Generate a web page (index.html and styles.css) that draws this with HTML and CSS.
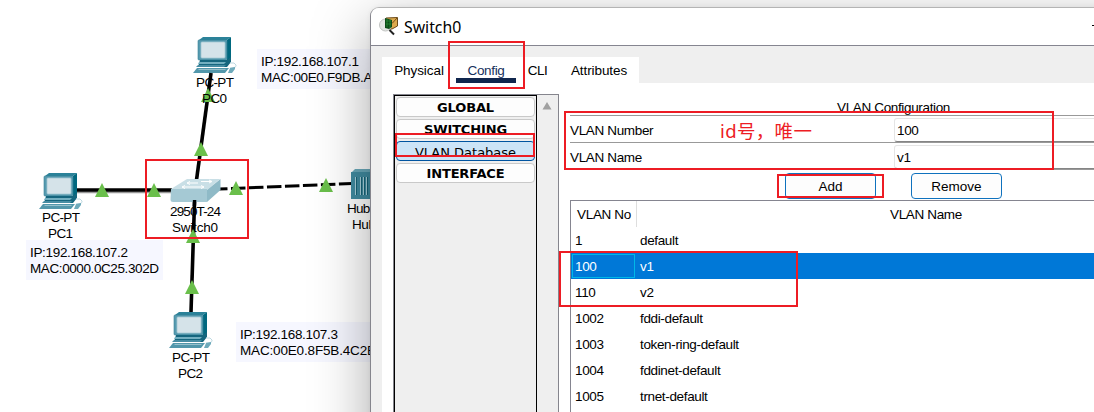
FILE: index.html
```html
<!DOCTYPE html>
<html lang="zh">
<head>
<meta charset="utf-8">
<title>Switch0</title>
<link rel="stylesheet" href="styles.css">
</head>
<body>
<div class="desktop">
  <svg class="topology" width="1094" height="412" viewBox="0 0 1094 412">
    <defs>
      <g id="pc">
        <path fill="#2b8299" d="M1 3 5 0H33L29 3Z"/>
        <path fill="#00687f" d="M29 3 33 0V21L29 24Z"/>
        <rect class="case" x="0" y="3" width="29" height="20" rx="1"/>
        <rect class="screen" x="3" y="5" width="24" height="16" rx="1"/>
        <path fill="#15667e" d="M2 23H29L33 20V25L29 30H0Z"/>
        <path fill="#72afc0" d="M1 25H28L26 27H0Z"/>
        <path fill="#478da3" d="M0 28H28L26 30H-2Z"/>
        <path fill="#5297ab" d="M-1 31H31L27 36H-5Z"/>
        <path fill="#95c0cc" d="M1 32H28L27 33H0Z"/>
        <path fill="none" stroke="#bed9e1" d="M32 26q5-1 6 2t-6 3"/>
        <path fill="#6eaabb" d="M32 31l5-1v2l-3 4h-4z"/>
      </g>
      <path id="up" fill="#6abf4b" d="M0-7 7 7H-7Z"/>
    </defs>

    <g class="notes">
      <rect x="257" y="49" width="150" height="40"/>
      <rect x="26" y="240" width="137" height="40"/>
      <rect x="236" y="322" width="150" height="40"/>
    </g>
    <g class="labels">
      <text x="261" y="66" textLength="98">IP:192.168.107.1</text>
      <text x="261" y="82" textLength="133">MAC:00E0.F9DB.A301</text>
      <text x="30" y="257" textLength="98">IP:192.168.107.2</text>
      <text x="30" y="273" textLength="129">MAC:0000.0C25.302D</text>
      <text x="240" y="339" textLength="98">IP:192.168.107.3</text>
      <text x="240" y="355" textLength="136">MAC:00E0.8F5B.4C2B</text>
    </g>

    <g class="links">
      <path class="shade" d="M74 192.200H172"/>
      <path d="M74 190H172"/>
      <path class="dashed" d="M219 189 352 183.500"/>
    </g>

    <use href="#pc" x="198" y="37"/>
    <use href="#pc" x="44" y="173"/>
    <use href="#pc" x="174" y="312"/>

    <g class="labels">
      <text x="196" y="87" textLength="38">PC-PT</text>
      <text x="42" y="222" textLength="38">PC-PT</text>
      <text x="48" y="238" textLength="25">PC1</text>
      <text x="172" y="362" textLength="38">PC-PT</text>
      <text x="178" y="378" textLength="25">PC2</text>
      <text x="170" y="216" textLength="51">2950T-24</text>
      <text x="172" y="232" textLength="46">Switch0</text>
      <text x="347" y="213" textLength="43">Hub-PT</text>
      <text x="352" y="229" textLength="31">Hub0</text>
    </g>

    <g class="links">
      <path d="M211 73 196.500 180"/>
      <path d="M194.500 202 191 312"/>
    </g>

    <g class="switch">
      <path fill="#c9dfe6" d="M171 189 187 179H220L207 190Z"/>
      <path fill="#a5c9d4" d="M171 189H207V202H173Q170.500 202 170.500 200Z"/>
      <path fill="#8fbac7" d="M207 190 220.500 179V190L207 202Z"/>
      <path class="arrows" d="M187 183h11m-11 0 3-1.500m-3 1.500 3 1.500M201 181.500h11m0 0-3-1.500m3 1.500-3 1.500M182 187h11m-11 0 3-1.500m-3 1.500 3 1.500M193 187h11m0 0-3-1.500m3 1.500-3 1.500"/>
    </g>
    <path class="link-end" d="M194.600 200 194.400 206"/>

    <g class="hub">
      <path fill="#6aa9ba" d="M351 173 355 169H390V173Z"/>
      <rect fill="#418ca1" x="351" y="172" width="40" height="27"/>
      <path stroke="#a9d2dd" d="M355.500 177v18M360.500 177v18M363.500 177v18M366.500 177v18"/>
      <path stroke="#176478" d="M356.500 177v18M361.500 177v18M364.500 177v18M367.500 177v18"/>
    </g>

    <use href="#up" x="208" y="95"/>
    <use href="#up" x="201" y="149"/>
    <use href="#up" x="102" y="190"/>
    <use href="#up" x="154" y="190"/>
    <use href="#up" x="236" y="188"/>
    <use href="#up" x="326" y="185"/>
    <use href="#up" x="193" y="236"/>
    <use href="#up" x="192" y="287"/>
    <text class="label" x="202" y="103" textLength="25">PC0</text>
  </svg>

  <section class="window">
    <header class="titlebar">
      <svg class="app-icon" width="20" height="20" viewBox="0 0 20 20">
        <path fill="#dca94d" stroke="#6c4c1a" d="M7 2 18.500 1.500V10L13 13H7Z"/>
        <path fill="none" stroke="#76501c" d="M8 3 13.500 7 18 2"/>
        <circle cx="6.500" cy="9" r="6" fill="#e4e7e4" stroke="#c1c3c1"/>
        <path fill="#0d4d18" d="M6 2 13 4V11L10 13 6 12Z"/>
        <path stroke="#28913a" stroke-width=".7" d="M7 5h5M7 8h5M8 3v8M11 4v8"/>
        <path stroke="#222" stroke-width="2" d="M10.500 14 15 18.500"/>
      </svg>
      <h1>Switch0</h1>
      <i class="minimize"></i>
    </header>
    <div class="client">
      <nav class="tabs">
        <span class="tab physical">Physical</span>
        <span class="tab active">Config</span>
        <span class="tab cli">CLI</span>
        <span class="tab attributes">Attributes</span>
      </nav>
      <div class="page">
        <aside class="sidebar">
          <div class="nav-list">
            <button class="nav group">GLOBAL</button>
            <button class="nav group">SWITCHING</button>
            <button class="nav selected">VLAN Database</button>
            <button class="nav group">INTERFACE</button>
          </div>
          <div class="scrollbar"><svg width="10" height="8"><path fill="#a0a0a0" d="M5 0 9.500 7.500H.5Z"/></svg></div>
        </aside>
        <main class="config">
          <h2>VLAN Configuration</h2>
          <div class="field"><label>VLAN Number</label><div class="input">100</div></div>
          <div class="field"><label>VLAN Name</label><div class="input">v1</div></div>
          <div class="actions"><button class="action">Add</button><button class="action">Remove</button></div>
          <div class="table">
            <div class="row head"><span>VLAN No</span><span>VLAN Name</span></div>
            <div class="row"><span>1</span><span>default</span></div>
            <div class="row current"><span>100</span><span>v1</span></div>
            <div class="row"><span>110</span><span>v2</span></div>
            <div class="row"><span>1002</span><span>fddi-default</span></div>
            <div class="row"><span>1003</span><span>token-ring-default</span></div>
            <div class="row"><span>1004</span><span>fddinet-default</span></div>
            <div class="row"><span>1005</span><span>trnet-default</span></div>
          </div>
        </main>
      </div>
    </div>
  </section>

  <svg class="marks" width="1094" height="412" viewBox="0 0 1094 412">
    <rect x="146" y="160" width="102" height="78"/>
    <rect x="449" y="42" width="75" height="46"/>
    <rect x="396" y="134" width="138" height="22"/>
    <rect x="565" y="112" width="488" height="57"/>
    <rect x="778" y="175" width="105" height="22"/>
    <rect x="560" y="252" width="237" height="54"/>
    <text x="720" y="138" textLength="92">id号，唯一</text>
  </svg>
</div>
</body>
</html>
```

FILE: styles.css
```css
* { box-sizing: border-box; }

body {
  margin: 0;
  background: #fff;
  color: #000;
  font: 13.5px/16px "Liberation Sans", Arial, sans-serif;
}

.desktop {
  position: relative;
  width: 1094px;
  height: 412px;
  overflow: hidden;
}

.topology { display: block; }
.notes { fill: #f6f7ff; }
.labels, .label { font-size: 13.5px; }
.case { fill: #579bb0; stroke: #347f95; stroke-width: .6; }
.screen { fill: #d5e3e9; stroke: #a6c9d3; stroke-width: .8; }
.links path { fill: none; stroke: #000; stroke-width: 3.6; }
.links .shade { stroke: #999; stroke-width: 2; }
.links .dashed { stroke-width: 3; stroke-dasharray: 14.5 3.5; stroke-dashoffset: 6; }
.link-end { stroke: #000; stroke-width: 3.4; }
.arrows { fill: none; stroke: #fff; stroke-width: 1; }

/* Device window */
.window {
  position: absolute;
  left: 370px;
  top: 7px;
  width: 820px;
  height: 480px;
  display: flex;
  flex-direction: column;
  overflow: hidden;
  border: 1px solid #a9a9a9;
  border-color: #b4b4b4 #85858d #85858d;
  border-radius: 9px 0 0 0;
  background: #efefef;
  box-shadow: 0 18px 58px rgba(0, 0, 0, .34), 0 0 5px rgba(0, 0, 0, .06);
}

.titlebar {
  display: flex;
  align-items: center;
  height: 38px;
  flex: none;
  padding-left: 8px;
  background: #fff;
  border-bottom: 1px solid #858590;
}

.app-icon { margin-top: -1px; }

.titlebar h1 {
  margin: 0 0 0 5px;
  font: 400 15.8px/22px "Noto Sans", "Open Sans", sans-serif;
}

.minimize {
  width: 10px;
  height: 1px;
  margin: -2px 0 0 631px;
  background: #000;
}

.client { padding: 11px 0 0 11px; flex: 1; }

.tabs {
  display: flex;
  width: 257px;
  height: 26px;
  background: #fff;
  line-height: 27px;
  text-align: center;
}

.tab { letter-spacing: -.08px; }
.physical { width: 74px; }
.active { width: 60px; color: #15305c; border-bottom: 5px solid #10264d; letter-spacing: -.35px; }
.cli { width: 42px; padding-left: 1px; letter-spacing: -.5px; }
.attributes { width: 80px; padding-left: 2px; }

.page { display: flex; height: 410px; background: #fff; padding: 11px 0 0 11px; }

.sidebar {
  display: flex;
  width: 166px;
  border: 1px solid #85858d;
  background: #efefef;
  flex: none;
}

.nav-list {
  display: flex;
  flex-direction: column;
  gap: 2px;
  width: 143px;
  padding: 1px;
  border: 1px solid #000;
}

.nav {
  height: 20px;
  padding: 0;
  border: 1px solid #c9c9c9;
  border-radius: 4px;
  background: #fdfdfd;
  color: #000;
  font: 13px/20px "DejaVu Sans", Verdana, sans-serif;
  text-align: center;
}

.group { font-weight: 700; letter-spacing: -.15px; }
.selected { background: #cce4f7; border-color: #0054a0; line-height: 22px; overflow: hidden; letter-spacing: 0; }
.scrollbar { padding: 7px 0 0 5px; line-height: 0; }

.config { flex: 1; margin-left: 11px; padding-top: 5px; letter-spacing: -.35px; }

.config h2 {
  width: 647px;
  height: 17px;
  margin: 0;
  border-bottom: 1px solid #999;
  font: inherit;
  line-height: 18px;
  text-align: center;
}

.field {
  display: flex;
  height: 27px;
  border-bottom: 1px solid #999;
}

.field label { width: 324px; padding-top: 7px; }

.input {
  flex: 1;
  margin-top: 2px;
  padding: 4px 2px 0;
  border: 1px solid #e5e5e5;
  border-bottom: 1px solid #858585;
  border-radius: 3px 0 0 3px;
  background: #fff;
}

.actions { display: flex; gap: 35px; height: 30px; padding: 3px 0 0 215px; }

.action {
  width: 91px;
  height: 26px;
  padding: 0;
  border: 1px solid #0f72be;
  border-radius: 4px;
  background: #fdfdfd;
  color: #000;
  font: 13.5px/26px "Liberation Sans", Arial, sans-serif;
}

.table { border: 1px solid #858590; height: 250px; }

.row { display: grid; grid-template-columns: 65px 580px; grid-template-rows: 26px; height: 26px; line-height: 27px; }
.row span { padding-left: 4px; }
.head span { padding: 0; text-align: center; }
.head span:first-child { border-right: 1px solid #dedede; width: 66px; padding-left: 1px; }
.current { background: #0078d7; color: #fff; }
.current span:first-child { border: 1px solid #00b8e8; margin: 1px; padding-left: 2px; line-height: 23px; }

/* Tutorial annotations */
.marks { position: absolute; inset: 0; }
.marks rect { fill: none; stroke: #ed1c24; stroke-width: 2; }
.marks text { fill: #ed1c24; font: 18.5px "Noto Sans", "Noto Sans CJK SC", sans-serif; }
```
